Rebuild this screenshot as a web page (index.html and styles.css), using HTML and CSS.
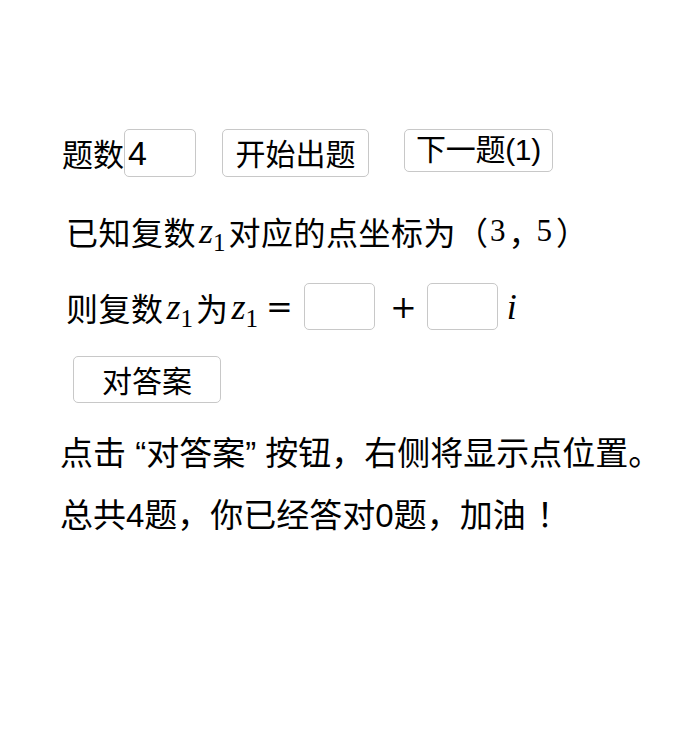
FILE: index.html
```html
<!DOCTYPE html>
<html lang="zh">
<head>
<meta charset="utf-8">
<link rel="stylesheet" href="styles.css">
</head>
<body>
<div class="page">
  <div class="row top">
    <span class="label">题数</span><input class="num" type="text" value="4">
    <button class="btn start">开始出题</button>
    <button class="btn next">下一题(1)</button>
  </div>
  <div class="row q1">
    <span class="cjk">已知复数</span><span class="m z"><i>z</i><sub>1</sub></span><span class="cjk">对应的点坐标为</span><span class="cjk paren">（</span><span class="m dig first-dig">3</span><span class="cjk comma">，</span><span class="m dig">5</span><span class="cjk paren close">）</span>
  </div>
  <div class="row q2">
    <span class="cjk">则复数</span><span class="m z"><i>z</i><sub>1</sub></span><span class="cjk">为</span><span class="m z"><i>z</i><sub>1</sub></span><span class="m op eq">=</span><input class="ans" type="text"><span class="m op plus">+</span><input class="ans" type="text"><span class="m ii"><i>i</i></span>
  </div>
  <div class="row q3">
    <button class="btn check">对答案</button>
  </div>
  <p class="info first">点击 “对答案” 按钮，右侧将显示点位置。</p>
  <p class="info">总共4题，你已经答对0题，加油<span class="bang">！</span></p>
</div>
</body>
</html>
```
FILE: styles.css
```css
html, body {
  margin: 0;
  padding: 0;
  background: #fff;
}
body {
  font-family: "Noto Sans CJK SC", "Noto Sans", sans-serif;
  color: #000;
}
.page {
  padding-top: 129px;
  padding-left: 62px;
}
.row {
  display: flex;
  align-items: center;
}
.top {
  align-items: flex-start;
  height: 48px;
}
.label {
  font-size: 31px;
  line-height: 48px;
}
.num {
  box-sizing: border-box;
  width: 72px;
  height: 48px;
  margin: 0;
  padding: 0 3px;
  border: 1px solid #c8c8c8;
  border-radius: 5px;
  font-family: "Liberation Sans", "Noto Sans CJK SC", sans-serif;
  font-size: 34px;
  color: #000;
  outline: none;
}
.btn {
  box-sizing: border-box;
  margin: 0;
  padding: 0;
  background: #fff;
  border: 1px solid #c8c8c8;
  border-radius: 5px;
  font-family: "Noto Sans CJK SC", "Liberation Sans", sans-serif;
  font-size: 30px;
  color: #000;
  line-height: 1;
}
.start {
  width: 147px;
  height: 48px;
  margin-left: 26px;
  padding-bottom: 2px;
}
.next {
  width: 149px;
  height: 43px;
  margin-left: 35px;
  font-family: "Liberation Sans", "Noto Sans CJK SC", sans-serif;
  letter-spacing: -0.3px;
  padding-bottom: 2px;
}
.cjk {
  font-size: 32px;
  letter-spacing: 0.5px;
}
.m {
  font-family: "Liberation Serif", "DejaVu Serif", serif;
  font-size: 36px;
}
.m i {
  font-style: italic;
}
.m sub {
  font-size: 25px;
  vertical-align: -8px;
  line-height: 0;
}
.z {
  margin: 0 3px 0 3px;
}
.q1 {
  margin-top: 30px;
  padding-left: 4px;
  height: 48px;
}
.paren {
  letter-spacing: 0;
}
.close {
  margin-left: 4px;
}
.dig {
  font-size: 31px;
  margin: 0;
}
.first-dig {
  margin-left: 2px;
  margin-right: 3px;
}
.comma {
  letter-spacing: -6px;
  margin-right: 2px;
}
.q2 {
  margin-top: 28px;
  padding-left: 4px;
  height: 47px;
}
.op {
  font-family: "DejaVu Serif", serif;
  font-size: 32px;
}
.eq {
  margin: 0 11px 0 5px;
}
.plus {
  margin: 0 10px 0 15px;
}
.ans {
  box-sizing: border-box;
  width: 71px;
  height: 47px;
  margin: 0;
  border: 1px solid #c8c8c8;
  border-radius: 5px;
  outline: none;
}
.ii {
  margin-left: 9px;
}
.q3 {
  margin-top: 26px;
  padding-left: 11px;
}
.check {
  width: 148px;
  height: 47px;
  padding-bottom: 2px;
}
.info {
  margin: 0;
  margin-left: -2px;
  font-family: "Liberation Sans", "Noto Sans CJK SC", sans-serif;
  font-size: 33px;
  line-height: 62px;
  white-space: nowrap;
}
.info.first {
  margin-top: 20px;
}
.bang {
  margin-left: 11px;
}
```
